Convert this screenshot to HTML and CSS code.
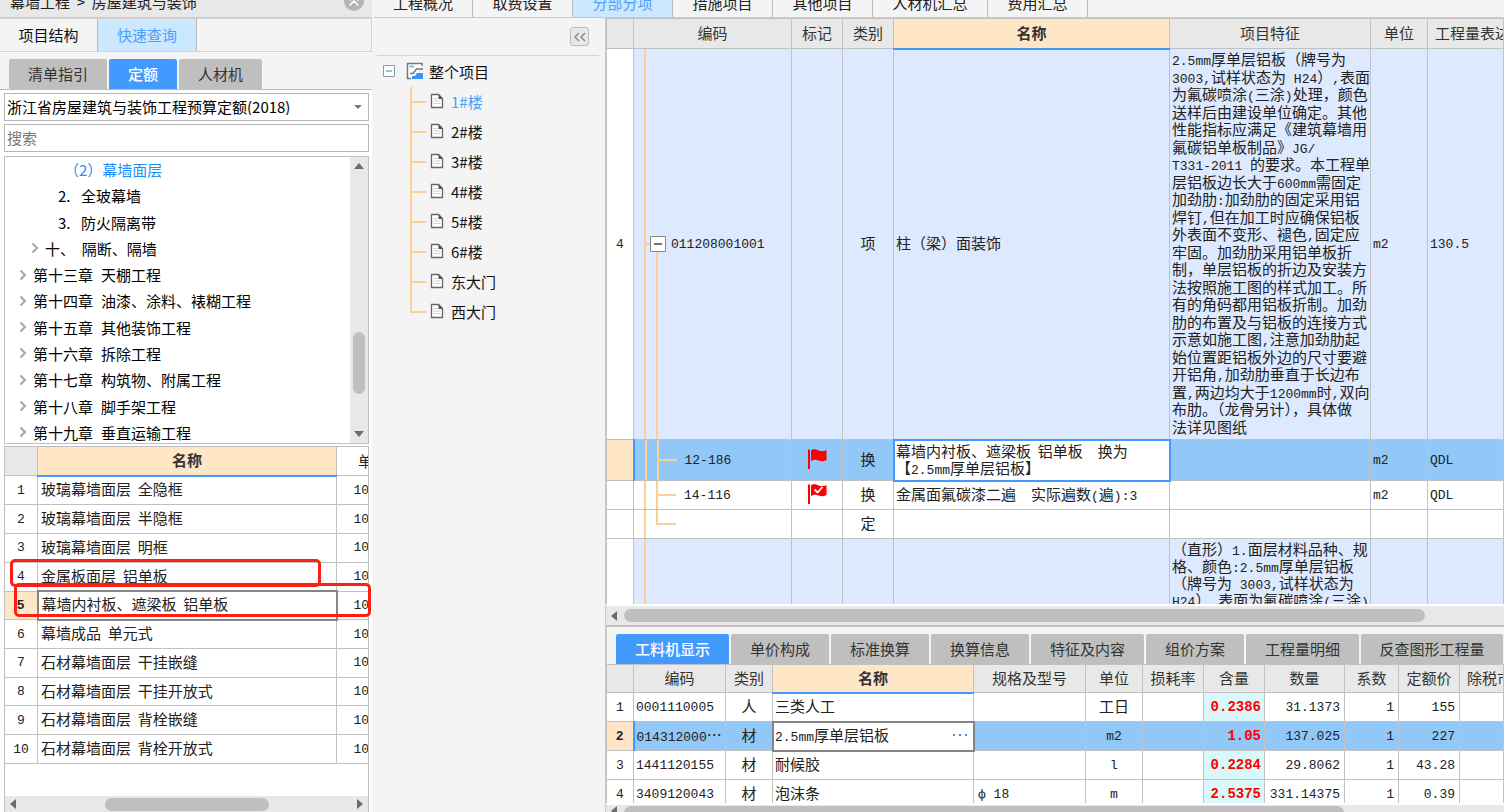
FILE: index.html
```html
<!DOCTYPE html>
<html lang="zh-CN">
<head>
<meta charset="utf-8">
<title>幕墙工程 - 分部分项</title>
<link rel="stylesheet" href="styles.css">
</head>
<body>
<svg class="defs" aria-hidden="true">
  <symbol id="doc" viewBox="0 0 14 16"><path d="M1.5 1.5h7l4 4v9h-11z" fill="#fff" stroke="#666" stroke-width="1.300"/><path d="M8.500 1v5h4.500z" fill="#555"/><path d="M3.500 8h7M3.500 10.500h7M3.500 5.500h4" stroke="#d0d0d0"/></symbol>
  <symbol id="chev" viewBox="0 0 8 12"><path d="M1.500 1.500l4.500 4.500l-4.500 4.500" fill="none" stroke="#a6a6a6" stroke-width="2"/></symbol>
  <symbol id="flag" viewBox="0 0 20 22"><path d="M1 1.500h2V21H1z" fill="#f00"/><path d="M4 2.500c3-2 5-1 7.500 0s5 1 8-.5v10c-3 1.500-5.500 1.500-8 .5s-4.500-1-7.500.5z" fill="#f00"/></symbol>
  <symbol id="arrow" viewBox="0 0 6 10"><path d="M6 0v10L0 5z" fill="#686d75"/></symbol>
</svg>
<div class="app">
  <aside class="side">
    <header class="title"><span class="crumb">幕墙工程&nbsp; &gt;&nbsp; 房屋建筑与装饰</span>
      <button class="round" aria-label="收起"><svg viewBox="0 0 20 20" width="20" height="20"><circle cx="10" cy="10" r="10" fill="#b4b4b4"/><path d="M5.500 9.500l4.500-4.500l4.500 4.500M5.500 14.500l4.500-4.500l4.500 4.500" fill="none" stroke="#fff" stroke-width="1.600"/></svg></button>
    </header>
    <nav class="views"><button>项目结构</button><button class="on">快速查询</button></nav>
    <nav class="pills side-pills"><button class="w98">清单指引</button><button class="w68 on">定额</button><button class="w83">人材机</button></nav>
    <div class="side-body">
      <div class="combo">
        <select aria-label="定额库"><option>浙江省房屋建筑与装饰工程预算定额(2018)</option></select>
        <svg class="caret" viewBox="0 0 8 4" width="8" height="4"><path d="M0 0h8L4 4z" fill="#777"/></svg>
      </div>
      <input class="search" type="text" placeholder="搜索" aria-label="搜索">
      <div class="chapters">
        <ul>
          <li class="l4 on">（2）幕墙面层</li>
          <li class="l3"><span class="ord">2.</span>全玻幕墙</li>
          <li class="l3"><span class="ord">3.</span>防火隔离带</li>
          <li class="l2"><svg class="chev"><use href="#chev"/></svg>十、&nbsp; 隔断、隔墙</li>
          <li><svg class="chev"><use href="#chev"/></svg><span>第十三章</span><span>天棚工程</span></li>
          <li><svg class="chev"><use href="#chev"/></svg><span>第十四章</span><span>油漆、涂料、裱糊工程</span></li>
          <li><svg class="chev"><use href="#chev"/></svg><span>第十五章</span><span>其他装饰工程</span></li>
          <li><svg class="chev"><use href="#chev"/></svg><span>第十六章</span><span>拆除工程</span></li>
          <li><svg class="chev"><use href="#chev"/></svg><span>第十七章</span><span>构筑物、附属工程</span></li>
          <li><svg class="chev"><use href="#chev"/></svg><span>第十八章</span><span>脚手架工程</span></li>
          <li><svg class="chev"><use href="#chev"/></svg><span>第十九章</span><span>垂直运输工程</span></li>
        </ul>
        <div class="vbar">
          <svg viewBox="0 0 10 6" width="10" height="6"><path d="M0 6h10L5 0z" fill="#686d75"/></svg>
          <i class="vthumb"></i>
          <svg viewBox="0 0 10 6" width="10" height="6"><path d="M0 0h10L5 6z" fill="#686d75"/></svg>
        </div>
      </div>
      <div class="quota">
        <div class="quota-view">
          <table class="quota-table">
            <colgroup><col class="c33"><col class="c299"><col class="c73"></colgroup>
            <thead><tr><th></th><th class="sorted">名称</th><th class="plain">单位</th></tr></thead>
            <tbody>
              <tr><td class="n">1</td><td>玻璃幕墙面层&nbsp; 全隐框</td><td class="n">100m2</td></tr>
              <tr><td class="n">2</td><td>玻璃幕墙面层&nbsp; 半隐框</td><td class="n">100m2</td></tr>
              <tr><td class="n">3</td><td>玻璃幕墙面层&nbsp; 明框</td><td class="n">100m2</td></tr>
              <tr><td class="n">4</td><td>金属板面层&nbsp; 铝单板</td><td class="n">100m2</td></tr>
              <tr><td class="n cur">5</td><td class="focus">幕墙内衬板、遮梁板&nbsp; 铝单板</td><td class="n">100m2</td></tr>
              <tr><td class="n">6</td><td>幕墙成品&nbsp; 单元式</td><td class="n">100m2</td></tr>
              <tr><td class="n">7</td><td>石材幕墙面层&nbsp; 干挂嵌缝</td><td class="n">100m2</td></tr>
              <tr><td class="n">8</td><td>石材幕墙面层&nbsp; 干挂开放式</td><td class="n">100m2</td></tr>
              <tr><td class="n">9</td><td>石材幕墙面层&nbsp; 背栓嵌缝</td><td class="n">100m2</td></tr>
              <tr><td class="n">10</td><td>石材幕墙面层&nbsp; 背栓开放式</td><td class="n">100m2</td></tr>
            </tbody>
          </table>
        </div>
        <div class="hbar"><svg class="arr"><use href="#arrow"/></svg><i class="hthumb q"></i><svg class="arr flip"><use href="#arrow"/></svg></div>
        <i class="mark m1"></i><i class="mark m2"></i>
      </div>
    </div>
  </aside>
  <main class="main">
    <nav class="tabs">
      <button class="w99">工程概况</button><button class="w100">取费设置</button><button class="w100 on">分部分项</button><button class="w100">措施项目</button><button class="w100">其他项目</button><button class="w115">人材机汇总</button><button class="w100">费用汇总</button>
    </nav>
    <div class="work">
      <section class="project">
        <div class="project-bar"><button class="fold" aria-label="折叠"><svg viewBox="0 0 12 10" width="12" height="10"><path d="M5 1L1 5l4 4M11 1L7 5l4 4" fill="none" stroke="#8a8a8a" stroke-width="1.500"/></svg></button></div>
        <div class="root">
          <svg width="12" height="12" viewBox="0 0 12 12"><path d="M.5.5h11v11H.5z" fill="#fff" stroke="#999"/><path d="M3 6h6" stroke="#2aa5dc" stroke-width="1.200"/></svg>
          <svg width="18" height="18" viewBox="0 0 18 18"><path d="M16 4V1.500H1.500v15H5" fill="#fff" stroke="#777" stroke-width="1.500"/><path d="M3.500 4.500H8" stroke="#7ab8f8" stroke-width="2"/><path d="M4 11.500h3l3.500-4.500h6.500" fill="none" stroke="#777" stroke-width="1.500"/><path d="M6 17v-3h3l2-3h6v6z" fill="#3e92f7"/></svg>
          <span>整个项目</span>
        </div>
        <ul class="units">
          <li class="on"><svg class="doc"><use href="#doc"/></svg>1#楼</li>
          <li><svg class="doc"><use href="#doc"/></svg>2#楼</li>
          <li><svg class="doc"><use href="#doc"/></svg>3#楼</li>
          <li><svg class="doc"><use href="#doc"/></svg>4#楼</li>
          <li><svg class="doc"><use href="#doc"/></svg>5#楼</li>
          <li><svg class="doc"><use href="#doc"/></svg>6#楼</li>
          <li><svg class="doc"><use href="#doc"/></svg>东大门</li>
          <li><svg class="doc"><use href="#doc"/></svg>西大门</li>
        </ul>
      </section>
      <section class="sheets">
        <div class="bill-view">
          <table class="bill">
            <colgroup><col class="c27"><col class="c158"><col class="c51"><col class="c51"><col class="c276"><col class="c201"><col class="c57"><col></colgroup>
            <thead><tr><th></th><th>编码</th><th>标记</th><th>类别</th><th class="sorted">名称</th><th>项目特征</th><th>单位</th><th class="cut">工程量表达式</th></tr></thead>
            <tbody>
              <tr class="item tall">
                <td class="n">4</td>
                <td class="n code t-root"><svg class="minus" width="24" height="16" viewBox="0 0 24 16"><path d="M0 8h6" stroke="#fccf98" stroke-width="2"/><path d="M5.500.5h15v15h-15z" fill="#fff" stroke="#888"/><path d="M9 8h8" stroke="#444" stroke-width="1.500"/></svg>011208001001</td>
                <td></td><td>项</td><td class="txt">柱（梁）面装饰</td>
                <td class="txt"><div class="feature">
                  <span><b class="n">2.5mm</b>厚单层铝板（牌号为</span>
                  <span><b class="n">3003,</b>试样状态为<b class="n"> H24</b>）<b class="n">,</b>表面</span>
                  <span>为氟碳喷涂<b class="n">(</b>三涂<b class="n">)</b>处理，颜色</span>
                  <span>送样后由建设单位确定。其他</span>
                  <span>性能指标应满足《建筑幕墙用</span>
                  <span>氟碳铝单板制品》<b class="n">JG/</b></span>
                  <span><b class="n">T331-2011 </b>的要求。本工程单</span>
                  <span>层铝板边长大于<b class="n">600mm</b>需固定</span>
                  <span>加劲肋<b class="n">:</b>加劲肋的固定采用铝</span>
                  <span>焊钉<b class="n">,</b>但在加工时应确保铝板</span>
                  <span>外表面不变形、褪色<b class="n">,</b>固定应</span>
                  <span>牢固。加劲肋采用铝单板折</span>
                  <span>制，单层铝板的折边及安装方</span>
                  <span>法按照施工图的样式加工。所</span>
                  <span>有的角码都用铝板折制。加劲</span>
                  <span>肋的布置及与铝板的连接方式</span>
                  <span>示意如施工图<b class="n">,</b>注意加劲肋起</span>
                  <span>始位置距铝板外边的尺寸要避</span>
                  <span>开铝角<b class="n">,</b>加劲肋垂直于长边布</span>
                  <span>置<b class="n">,</b>两边均大于<b class="n">1200mm</b>时<b class="n">,</b>双向</span>
                  <span>布肋。（龙骨另计），具体做</span>
                  <span>法详见图纸</span>
                </div></td>
                <td class="n txt">m2</td><td class="n txt">130.5</td>
              </tr>
              <tr class="sel">
                <td class="cur"></td><td class="n code t-mid">12-186</td>
                <td><svg class="flag" role="img" aria-label="标记"><use href="#flag"/></svg></td><td>换</td>
                <td class="txt focus">幕墙内衬板、遮梁板&nbsp; 铝单板　换为<br>【<b class="n">2.5mm</b>厚单层铝板】</td><td></td><td class="n txt">m2</td><td class="n txt">QDL</td>
              </tr>
              <tr class="row">
                <td></td><td class="n code t-mid">14-116</td>
                <td><svg class="flag" viewBox="0 0 20 22" role="img" aria-label="已核对"><use href="#flag"/><path d="M7.500 6.500l3 3l5-5.500" fill="none" stroke="#fff" stroke-width="1.800"/></svg></td><td>换</td>
                <td class="txt">金属面氟碳漆二遍　实际遍数<b class="n">(</b>遍<b class="n">):3</b></td><td></td><td class="n txt">m2</td><td class="n txt">QDL</td>
              </tr>
              <tr class="row"><td></td><td class="code t-end"></td><td></td><td>定</td><td></td><td></td><td></td><td></td></tr>
              <tr class="item next">
                <td></td><td class="t-line"></td><td></td><td></td><td></td>
                <td class="txt"><div class="feature-next">
                  <span>（直形）<b class="n">1.</b>面层材料品种、规</span>
                  <span>格、颜色<b class="n">:2.5mm</b>厚单层铝板</span>
                  <span>（牌号为<b class="n"> 3003,</b>试样状态为</span>
                  <span><b class="n">H24</b>）<b class="n">,</b>表面为氟碳喷涂<b class="n">(</b>三涂<b class="n">)</b></span>
                </div></td><td></td><td></td>
              </tr>
            </tbody>
          </table>
        </div>
        <div class="hbar bill-bar"><svg class="arr"><use href="#arrow"/></svg><i class="hthumb b"></i></div>
        <nav class="pills detail-pills"><button class="w112 on">工料机显示</button><button class="w98">单价构成</button><button class="w98">标准换算</button><button class="w98">换算信息</button><button class="w112">特征及内容</button><button class="w98">组价方案</button><button class="w112">工程量明细</button><button class="w142">反查图形工程量</button></nav>
        <div class="detail-view">
          <table class="detail">
            <colgroup><col class="c27"><col class="c92"><col class="c47"><col class="c201"><col class="c112"><col class="c57"><col class="c61"><col class="c61"><col class="c80"><col class="c54"><col class="c61"><col></colgroup>
            <thead><tr><th></th><th>编码</th><th>类别</th><th class="sorted">名称</th><th>规格及型号</th><th>单位</th><th>损耗率</th><th>含量</th><th>数量</th><th>系数</th><th>定额价</th><th class="cut">除税市场价</th></tr></thead>
            <tbody>
              <tr><td class="n">1</td><td class="n txt">0001110005</td><td>人</td><td class="txt">三类人工</td><td></td><td>工日</td><td></td><td class="n qty">0.2386</td><td class="n num">31.1373</td><td class="n num">1</td><td class="n num">155</td><td></td></tr>
              <tr class="sel"><td class="n cur">2</td><td class="n txt">014312000<span class="dots">…</span></td><td>材</td><td class="txt focus"><div class="pick"><span><b class="n">2.5mm</b>厚单层铝板</span><button aria-label="选择"><svg width="14" height="2" viewBox="0 0 14 2"><path d="M0 0h2v2H0zM6 0h2v2H6zM12 0h2v2h-2z" fill="#4a97e0"/></svg></button></div></td><td></td><td class="n">m2</td><td></td><td class="n qty">1.05</td><td class="n num">137.025</td><td class="n num">1</td><td class="n num">227</td><td></td></tr>
              <tr><td class="n">3</td><td class="n txt">1441120155</td><td>材</td><td class="txt">耐候胶</td><td></td><td class="n">l</td><td></td><td class="n qty">0.2284</td><td class="n num">29.8062</td><td class="n num">1</td><td class="n num">43.28</td><td></td></tr>
              <tr><td class="n">4</td><td class="n txt">3409120043</td><td>材</td><td class="txt">泡沫条</td><td class="n spec">ф 18</td><td class="n">m</td><td></td><td class="n qty">2.5375</td><td class="n num">331.14375</td><td class="n num">1</td><td class="n num">0.39</td><td></td></tr>
            </tbody>
          </table>
        </div>
        <div class="hbar detail-bar"><svg class="arr"><use href="#arrow"/></svg><i class="hthumb d"></i></div>
      </section>
    </div>
  </main>
</div>
</body>
</html>
```

FILE: styles.css
```css
* { box-sizing: border-box; }
body {
  margin: 0;
  background: #f4f4f4;
  color: #222;
  font: 15px/17px "Noto Sans CJK SC", sans-serif;
}
button, select, input { font: inherit; color: inherit; margin: 0; padding: 0; border: 0; background: none; }
button { white-space: nowrap; }
ul { list-style: none; margin: 0; padding: 0; }
i { display: block; }
.defs { display: none; }
.n { font-family: "Liberation Mono", "DejaVu Sans Mono", monospace; font-size: 13px; }
b.n { font-weight: 400; white-space: pre; line-height: 1px; }

.app { display: flex; height: 100vh; overflow: hidden; }

/* left panel */
.side { flex: none; width: 374px; display: flex; flex-direction: column; border-right: 2px solid #f4f4f4; }
.title {
  height: 18px; flex: none; overflow: hidden; display: flex; justify-content: space-between; align-items: flex-end;
  padding: 0 8px 0 10px; background: #e8e8e8; border-bottom: 1px solid #c9c9c9;
}
.crumb { line-height: 30px; }
.round { height: 26px; display: flex; }
.views { flex: none; height: 34px; display: flex; border: solid #d4d4d4; border-width: 1px 1px 1px 0; }
.views button { width: 98px; border-right: 1px solid #bbb; color: #111; padding-bottom: 2px; }
.views .on { background: #cce8ff; color: #4a9eff; width: 99px; }
.pills { display: flex; gap: 2px; flex: none; }
.pills button { height: 30px; padding-bottom: 2px; background: #bfbfbf; border-radius: 2px 2px 0 0; color: #333; flex: none; }
.pills .on { background: #429aff; color: #fff; font-weight: 500; }
.side-pills { padding: 7px 0 0 9px; border-bottom: 1px solid #bfbfbf; }
.side-body { flex: 1; min-height: 0; display: flex; flex-direction: column; padding: 3px 3px 0 4px; background: #fff; }
.combo { height: 28px; flex: none; display: flex; align-items: center; border: 1px solid #b5b5b5; padding-right: 6px; }
.combo select { flex: 1; height: 26px; appearance: none; padding: 0 0 2px 2px; color: #000; font-size: 15px; }
.search { height: 28px; flex: none; border: 1px solid #b5b5b5; margin-top: 3px; padding: 0 0 2px 2px; }
.search::placeholder { color: #777; }
.chapters { height: 288px; flex: none; margin-top: 4px; display: flex; border: 1px solid #bfbfbf; overflow: hidden; color: #000; }
.chapters ul { flex: 1; height: 289px; display: flex; flex-direction: column; }
.chapters li { flex: 1; display: flex; align-items: center; gap: 8px; padding: 0 0 1px 14px; white-space: nowrap; }
.chapters .l2 { padding-left: 26px; gap: 6px; }
.chapters .l3 { padding-left: 53px; }
.chapters .l4 { padding-left: 59px; }
.chapters .on { color: #1a8fff; }
.chapters .chev + span { margin-left: -2px; }
.ord { width: 15px; }
.chev { width: 8px; height: 12px; }
.vbar { width: 18px; flex: none; background: #e8e8e8; display: flex; flex-direction: column; align-items: center; padding: 6px 0; }
.vthumb { width: 12px; height: 62px; margin: 163px 0 auto; border-radius: 6px; background: #bfbfbf; }
.quota { position: relative; flex: 1; min-height: 0; margin-top: 2px; display: flex; flex-direction: column; border: solid #bfbfbf; border-width: 1px 1px 0; }
.quota-view { flex: 1; overflow: hidden; }

/* tables */
table { border-collapse: collapse; table-layout: fixed; }
th, td { border: 1px solid #c1c1c1; padding: 0; text-align: center; white-space: nowrap; overflow: hidden; }
td:not(.n) { padding-bottom: 3px; }
th { background: #e8e8e8; font-weight: 400; color: #333; padding-bottom: 2px; }
th.sorted { background: #ffe6c7; font-weight: 700; border-bottom: 2px solid #429aff; }
th.plain { background: #fff; color: #222; }
th.cut { text-align: left; padding-left: 7px; }
td.txt { text-align: left; padding-left: 2px; }
td.cur { background: #ffe6c7; font-weight: 700; }
td.focus { background: #fff; }
.sel td { background-color: #91c8f7; }
.sel td.cur { background: #ffe6c7; }
.sel td.focus { background: #fff; }

.quota-table { width: 405px; height: 318px; margin: -1px 0 0 -1px; }
.quota-table thead tr { height: 29px; }
.quota-table td:nth-child(2) { text-align: left; padding-left: 3px; }
.quota-table td.focus { outline: 2px solid #858585; outline-offset: -1px; }
.quota-table td.cur { border-right: 2px solid #429aff; }
.mark { position: absolute; border: 3px solid #fb2013; border-radius: 5px; }
.m1 { left: 5px; top: 112px; width: 311px; height: 28px; }
.m2 { left: 9px; top: 136px; width: 357px; height: 34px; }

/* scroll bars */
.hbar { height: 16px; flex: none; display: flex; align-items: center; background: #e8e8e8; padding: 0 5px; }
.hthumb { height: 13px; border-radius: 7px; background: #bfbfbf; }
.arr { width: 6px; height: 10px; flex: none; }
.flip { transform: rotate(180deg); margin-left: auto; }
.q { width: 164px; margin-left: 89px; }
.b { width: 801px; margin-left: 7px; }
.d { width: 720px; margin-left: 7px; }

/* main tabs */
.main { flex: 1; min-width: 0; display: flex; flex-direction: column; }
.tabs { height: 18px; flex: none; overflow: hidden; display: flex; align-items: flex-end; border-bottom: 1px solid #c9c9c9; }
.tabs button { height: 30px; border-right: 1px solid #bbb; flex: none; }
.tabs .on { background: #cce8ff; color: #4a9eff; }
.work { flex: 1; min-height: 0; display: flex; }

/* project tree */
.project { flex: none; width: 233px; padding: 0 6px 0 3px; border-right: 2px solid #c9c9c9; color: #111; }
.project-bar { height: 38px; display: flex; justify-content: flex-end; align-items: center; padding-right: 10px; border-bottom: 1px solid #d4d4d4; }
.fold { width: 19px; height: 19px; display: flex; align-items: center; justify-content: center; border: 1px solid #bbb; border-radius: 3px; background: #e8e8e8; }
.root { height: 30px; margin-top: 1px; display: flex; align-items: center; padding: 0 0 2px 6px; }
.root svg:nth-child(2) { margin: 0 5px 0 11px; }
.units { margin-left: 33px; }
.units li {
  height: 30px; display: flex; align-items: center; gap: 7px; padding: 0 0 2px 20px;
  background: linear-gradient(#fccf98, #fccf98) 0 0 / 2px 100% no-repeat, linear-gradient(#fccf98, #fccf98) 1px 14px / 15px 2px no-repeat;
}
.units li:last-child { background-size: 2px 16px, 15px 2px; }
.units .on { color: #4a9eff; }
.doc { width: 14px; height: 16px; }

/* bill table */
.sheets { flex: 1; min-width: 0; display: flex; flex-direction: column; margin-left: -1px; }
.bill-view { flex: 1; min-height: 0; overflow: hidden; background: #fff; border-bottom: 2px solid #fff; }
.bill, .detail { width: 100%; background: #fff; }
.bill thead tr { height: 30px; }
.item td { background-color: #dce9fe; }
.item td:first-child { background: #fff; }
.tall { height: 391px; }
.bill .sel { height: 41px; }
.row { height: 29px; }
.next { height: 390px; }
.next td { vertical-align: top; }
.feature { height: 385px; display: flex; flex-direction: column; justify-content: space-between; }
.feature span, .feature-next span { display: block; height: 17px; }
.feature-next { display: flex; flex-direction: column; padding-top: 1px; }
.code { text-align: left; }
.bill .sel .focus { outline: 2px solid #429aff; outline-offset: -1px; }
.bill .cur { border-right: 2px solid #429aff; }
.minus { margin: 0 2px 0 11px; vertical-align: middle; }
.t-root, .t-mid, .t-end, .t-line { background-image: linear-gradient(#fccf98, #fccf98), linear-gradient(#fccf98, #fccf98), linear-gradient(#fccf98, #fccf98); background-repeat: no-repeat; }
.t-root { background-size: 2px 100%, 2px 188px, 0 0; background-position: 10px 0, 22px 100%, 0 0; }
.t-mid { padding-left: 50px; background-size: 2px 100%, 2px 100%, 20px 2px; background-position: 10px 0, 22px 0, 22px 50%; }
.t-end { background-size: 2px 100%, 2px 15px, 20px 2px; background-position: 10px 0, 22px 0, 22px 13px; }
.t-line { background-size: 2px 100%, 0 0, 0 0; background-position: 10px 0, 0 0, 0 0; }
.flag { width: 20px; height: 22px; vertical-align: middle; }
.bill-bar { height: 21px; border-bottom: 2px solid #c1c1c1; }

/* detail table */
.detail-pills { padding: 7px 0 0 10px; overflow: hidden; }
.detail-view { height: 139px; flex: none; overflow: hidden; background: #fff; }
.detail tr { height: 29px; }
.detail thead tr { height: 28px; }
.detail td.num { text-align: right; padding-right: 4px; }
.detail td.qty { text-align: right; padding-right: 3px; font-weight: 700; color: #f00; background: #daf8f9; font-size: 14px; }
.detail .sel td.qty { background: #91c8f7; }
.detail td.spec { text-align: left; padding-left: 4px; }
.detail .focus { outline: 2px solid #858585; outline-offset: -1px; }
.detail .cur { border-right: 2px solid #429aff; }
.dots { font-family: "Noto Sans CJK SC", sans-serif; font-size: 15px; line-height: 15px; }
.pick { display: flex; justify-content: space-between; align-items: center; padding-right: 6px; }
.pick button { display: flex; padding: 4px 0; }
.detail-bar { height: 9px; align-items: flex-start; padding-top: 1px; overflow: hidden; border-top: 2px solid #fff; }

/* widths */
.w68 { width: 68px; } .w83 { width: 83px; } .w98 { width: 98px; } .w99 { width: 99px; } .w100 { width: 100px; }
.w112 { width: 113px; } .w115 { width: 115px; } .w142 { width: 142px; }
.c27 { width: 27px; } .c33 { width: 33px; } .c47 { width: 47px; } .c51 { width: 51px; } .c54 { width: 54px; }
.c57 { width: 57px; } .c61 { width: 61px; } .c73 { width: 73px; } .c80 { width: 80px; } .c92 { width: 92px; }
.c112 { width: 112px; } .c158 { width: 158px; } .c201 { width: 201px; } .c276 { width: 276px; } .c299 { width: 299px; }
```
